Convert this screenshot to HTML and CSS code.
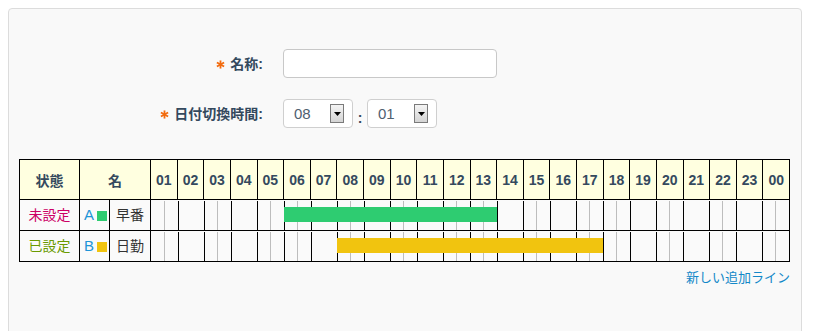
FILE: index.html
```html
<!DOCTYPE html>
<html lang="ja">
<head>
<meta charset="utf-8">
<title>Shift</title>
<link rel="stylesheet" href="styles.css">
</head>
<body>
<div class="panel">
  <div class="form">
    <div class="row">
      <label class="label"><svg class="star" viewBox="0 0 10 10" width="9" height="9"><g stroke="#f26b0f" stroke-width="2" stroke-linecap="butt"><line x1="5" y1="0.5" x2="5" y2="9.5"/><line x1="1" y1="2.7" x2="9" y2="7.3"/><line x1="1" y1="7.3" x2="9" y2="2.7"/></g></svg>名称:</label>
      <div class="input"></div>
    </div>
    <div class="row">
      <label class="label"><svg class="star" viewBox="0 0 10 10" width="9" height="9"><g stroke="#f26b0f" stroke-width="2" stroke-linecap="butt"><line x1="5" y1="0.5" x2="5" y2="9.5"/><line x1="1" y1="2.7" x2="9" y2="7.3"/><line x1="1" y1="7.3" x2="9" y2="2.7"/></g></svg>日付切換時間:</label>
      <div class="time">
        <div class="select"><span class="val">08</span><span class="btn"><svg viewBox="0 0 7 4" width="7" height="4"><path d="M0 0H7L3.5 4Z" fill="#000"/></svg></span></div>
        <span class="colon">:</span>
        <div class="select"><span class="val">01</span><span class="btn"><svg viewBox="0 0 7 4" width="7" height="4"><path d="M0 0H7L3.5 4Z" fill="#000"/></svg></span></div>
      </div>
    </div>
  </div>

  <table class="schedule">
    <colgroup>
      <col class="c-state"><col class="c-code"><col class="c-name">
      <col span="24">
    </colgroup>
    <thead>
      <tr>
        <th>状態</th><th colspan="2">名</th>
        <th>01</th><th>02</th><th>03</th><th>04</th><th>05</th><th>06</th><th>07</th><th>08</th>
        <th>09</th><th>10</th><th>11</th><th>12</th><th>13</th><th>14</th><th>15</th><th>16</th>
        <th>17</th><th>18</th><th>19</th><th>20</th><th>21</th><th>22</th><th>23</th><th>00</th>
      </tr>
    </thead>
    <tbody>
      <tr>
        <td class="state unset">未設定</td>
        <td class="code"><span class="letter">A</span><span class="sq green"></span></td>
        <td class="name">早番</td>
        <td class="timeline" colspan="24">
          <div class="grid"><span></span><span></span><span></span><span></span><span></span><span></span><span></span><span></span><span></span><span></span><span></span><span></span><span></span><span></span><span></span><span></span><span></span><span></span><span></span><span></span><span></span><span></span><span></span><span></span></div>
          <div class="bar green" style="left:20.8333%;width:33.3333%"></div>
        </td>
      </tr>
      <tr>
        <td class="state set">已設定</td>
        <td class="code"><span class="letter">B</span><span class="sq yellow"></span></td>
        <td class="name">日勤</td>
        <td class="timeline" colspan="24">
          <div class="grid"><span></span><span></span><span></span><span></span><span></span><span></span><span></span><span></span><span></span><span></span><span></span><span></span><span></span><span></span><span></span><span></span><span></span><span></span><span></span><span></span><span></span><span></span><span></span><span></span></div>
          <div class="bar yellow" style="left:29.1667%;width:41.6667%"></div>
        </td>
      </tr>
    </tbody>
  </table>
  <div class="more"><a href="#">新しい追加ライン</a></div>
</div>
</body>
</html>
```
FILE: styles.css
```css
html, body {
  margin: 0;
  padding: 0;
  background: #fff;
}
body {
  padding: 8px;
  font-family: "Liberation Sans", "Noto Sans CJK JP", sans-serif;
  font-size: 14px;
  color: #333;
  overflow: hidden;
}
.panel {
  box-sizing: border-box;
  width: 794px;
  min-height: 360px;
  background: #f9f9f9;
  border: 1px solid #dcdcdc;
  border-radius: 4px;
  padding: 40px 11px 0 10px;
}
.form {
  display: flex;
  flex-direction: column;
  gap: 21px;
}
.row {
  display: flex;
  align-items: center;
  gap: 20px;
  height: 29px;
}
.label {
  width: 244px;
  display: flex;
  justify-content: flex-end;
  align-items: center;
  font-weight: bold;
  color: #34495e;
  font-size: 14px;
  line-height: 20px;
}
.star {
  margin-right: 5px;
  margin-top: 2px;
}
.input {
  box-sizing: border-box;
  width: 214px;
  height: 29px;
  background: #fff;
  border: 1px solid #c8c8c8;
  border-radius: 4px;
}
.time {
  display: flex;
  align-items: center;
}
.select {
  box-sizing: border-box;
  width: 70px;
  height: 29px;
  background: #fff;
  border: 1px solid #cfcfcf;
  border-radius: 4px;
  display: flex;
  align-items: center;
  justify-content: space-between;
  padding: 0 8px 0 10px;
}
.val {
  font-size: 15px;
  color: #4f6070;
  line-height: 18px;
  margin-top: 1px;
}
.btn {
  box-sizing: border-box;
  width: 14px;
  height: 19px;
  border: 1px solid #7a7a7a;
  background: linear-gradient(#f4f4f4, #d4d4d4);
  display: flex;
  align-items: center;
  justify-content: center;
}
.colon {
  width: 14px;
  text-align: center;
  font-weight: bold;
  color: #34495e;
  padding-top: 8px;
}
.schedule {
  margin-top: 31px;
  width: 771px;
  border-collapse: collapse;
  table-layout: fixed;
  border: 1px solid #000;
}
.c-state { width: 60px; }
.c-code { width: 30px; }
.c-name { width: 41px; }
.schedule th,
.schedule td {
  border: 1px solid #000;
  padding: 0;
}
.schedule th {
  background: #ffffe0;
  height: 39px;
  font-weight: bold;
  color: #34495e;
  font-size: 14px;
  text-align: center;
}
.schedule td {
  background: #fafafa;
  text-align: center;
  line-height: 29px;
}
.state.unset { color: #cc0066; }
.state.set { color: #6a9a00; }
.code {
  text-align: left;
}
.code .letter {
  color: #1e95d8;
  margin-left: 2px;
  font-size: 15px;
}
.sq {
  display: inline-block;
  width: 10px;
  height: 10px;
  margin-left: 3px;
  vertical-align: -1px;
}
.green { background: #2ecc71; }
.yellow { background: #f1c40f; }
.name { color: #333; }
.timeline {
  position: relative;
}
.grid {
  display: grid;
  grid-template-columns: repeat(24, 1fr);
  height: 29px;
}
.grid span {
  border-left: 1px solid #000;
  background: linear-gradient(to right, transparent calc(50% - 1px), #bdbdbd calc(50% - 1px), #bdbdbd 50%, transparent 50%);
}
.grid span:first-child {
  border-left: none;
}
.bar {
  position: absolute;
  top: 7px;
  height: 15px;
}
.more {
  text-align: right;
  width: 771px;
  margin-top: 6px;
  line-height: 18px;
}
.more a {
  color: #1288c8;
  font-size: 13px;
  text-decoration: none;
}
```
